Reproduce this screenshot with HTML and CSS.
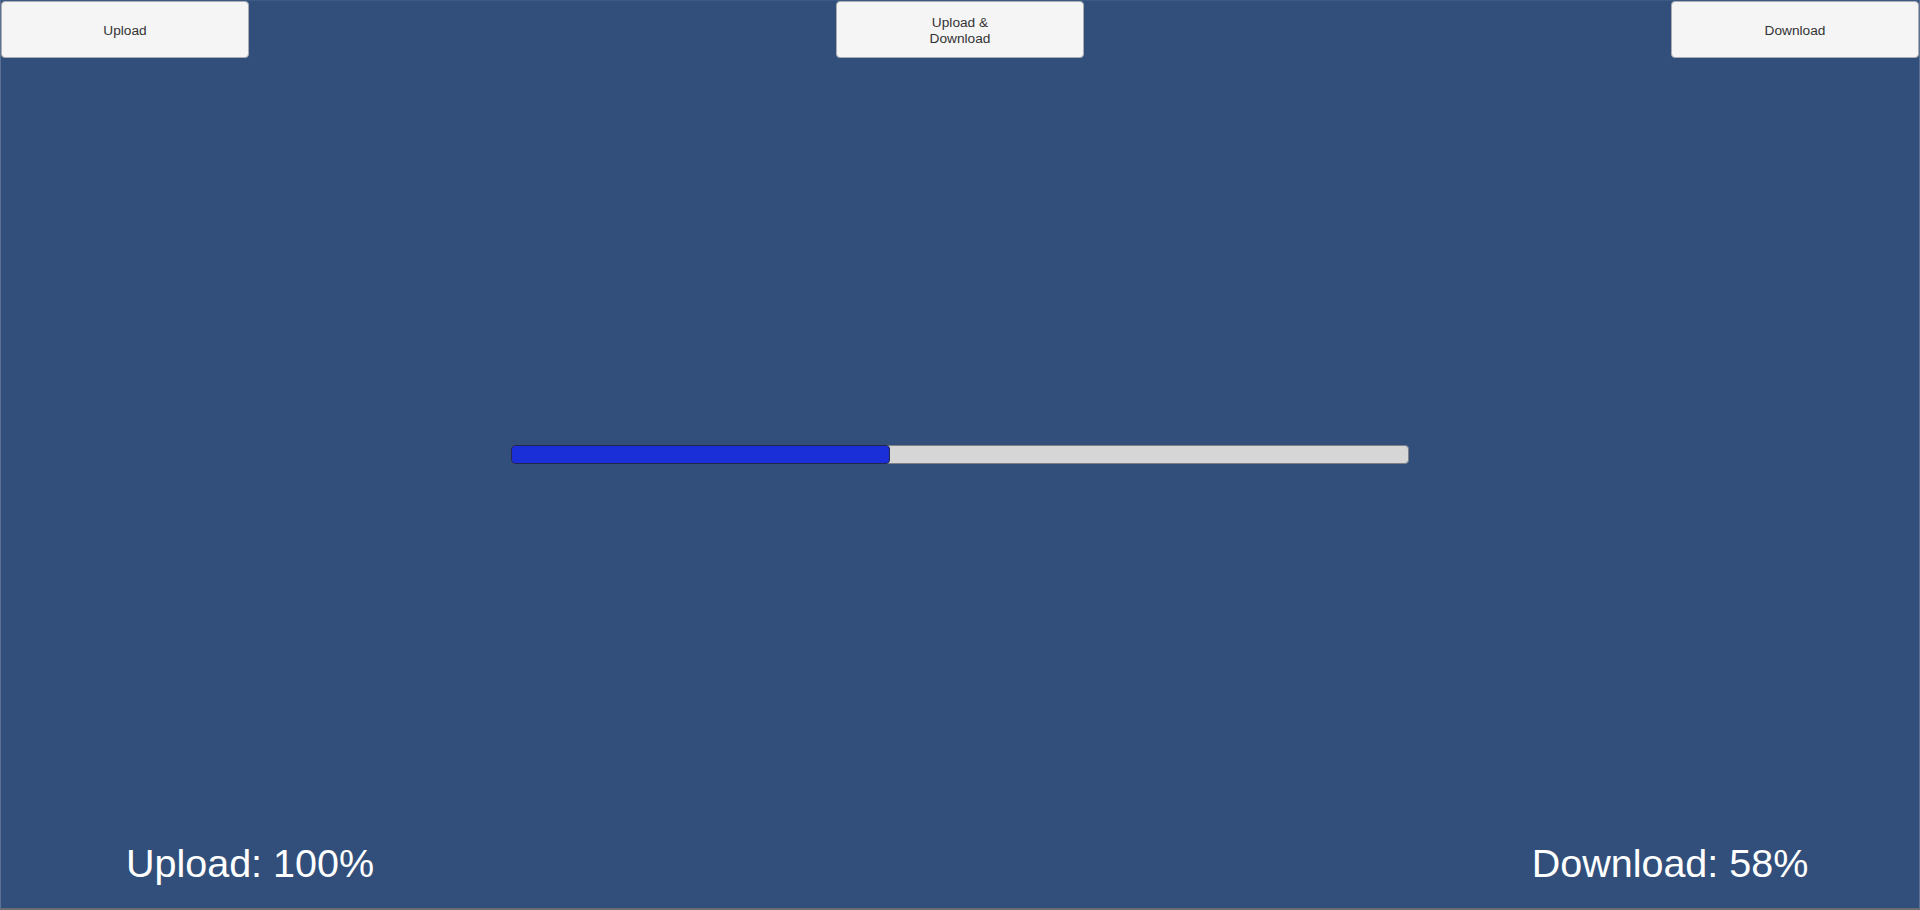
FILE: index.html
```html
<!DOCTYPE html>
<html lang="en">
<head>
<meta charset="utf-8">
<title>Upload / Download</title>
<link rel="stylesheet" href="styles.css">
</head>
<body>
<div class="app">
  <header class="toolbar">
    <button class="btn">Upload</button>
    <button class="btn">Upload &amp;<br>Download</button>
    <button class="btn">Download</button>
  </header>
  <main class="stage">
    <div class="progress">
      <div class="progress-fill" style="width: 42.3%"></div>
    </div>
  </main>
  <footer class="status">
    <div class="status-label">Upload: 100%</div>
    <div class="status-label">Download: 58%</div>
  </footer>
</div>
</body>
</html>
```

FILE: styles.css
```css
html, body {
  margin: 0;
  padding: 0;
  height: 100%;
}

body {
  background: #314f7a;
  font-family: "Liberation Sans", Arial, sans-serif;
  overflow: hidden;
}

.app {
  box-sizing: border-box;
  height: 910px;
  display: flex;
  flex-direction: column;
  border-left: 1px solid #5d7192;
  border-right: 1px solid #5d7192;
  border-top: 1px solid #3d5a84;
  border-bottom: 2px solid #6b6d70;
}

.toolbar {
  display: flex;
  justify-content: space-between;
  align-items: flex-start;
}

.btn {
  box-sizing: border-box;
  width: 248px;
  height: 57px;
  margin: 0;
  background: #f5f5f5;
  border: 1px solid #a9acb1;
  border-radius: 4px;
  color: #333333;
  font-family: "Liberation Sans", Arial, sans-serif;
  font-size: 13.7px;
  line-height: 16px;
  padding: 2px 0 0;
  text-align: center;
}

.stage {
  flex: 1;
  display: flex;
  align-items: center;
  justify-content: center;
  padding-top: 10px;
}

.progress {
  box-sizing: border-box;
  display: flex;
  width: 898px;
  height: 19px;
  background: #d6d6d6;
  border: 1px solid #7f8087;
  border-radius: 4px;
}

.progress-fill {
  box-sizing: border-box;
  height: 19px;
  margin: -1px 0 -1px -1px;
  background: #1b2fd8;
  border: 1px solid #23284a;
  border-radius: 4px;
}

.status {
  display: flex;
  justify-content: space-between;
  padding-bottom: 22px;
}

.status-label {
  width: 498px;
  text-align: center;
  color: #ffffff;
  font-size: 39.5px;
  line-height: 46px;
}
```
